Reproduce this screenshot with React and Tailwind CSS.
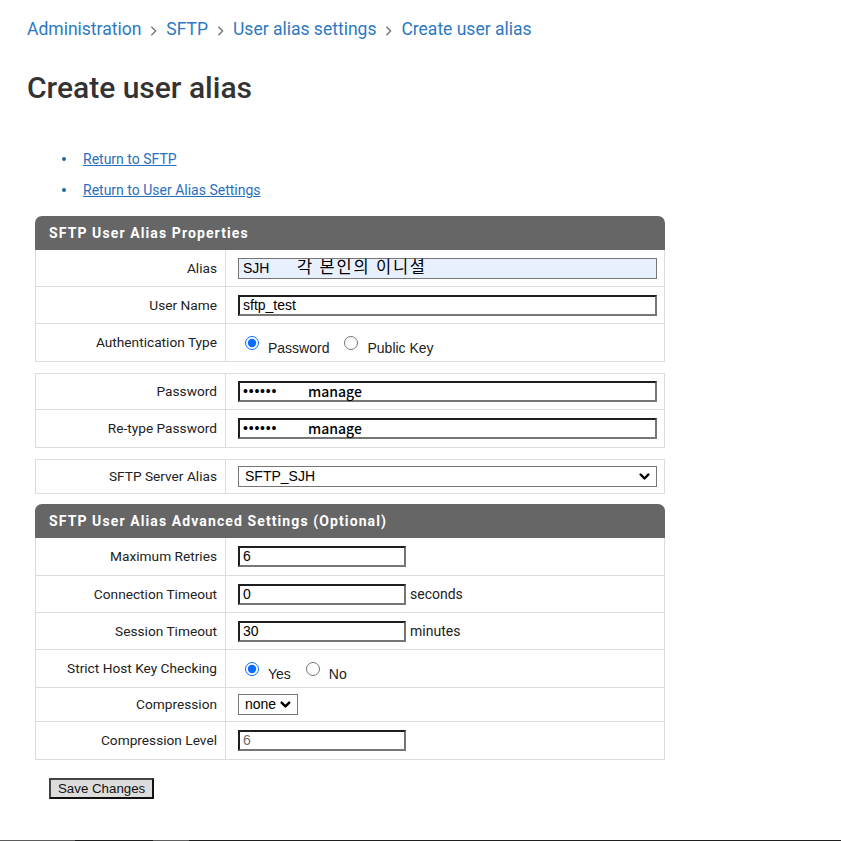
import React from 'react';

const roboto = { fontFamily: 'Roboto, "Noto Sans", sans-serif' };

const insetBase =
  "h-[21px] border-2 border-t-[#1e1e1e] border-l-[#1e1e1e] border-r-[#767676] border-b-[#767676] bg-white px-[3px] text-[14px] font-['Liberation_Sans',Arial,sans-serif] outline-none";
const insetInput = `${insetBase} text-black`;

function Chevron({ className = "" }) {
  return (
    <svg viewBox="0 0 10 10" className={className} fill="none" stroke="currentColor" strokeWidth="2.2" strokeLinecap="round" strokeLinejoin="round">
      <path d="M1.5 3.2 L5 6.8 L8.5 3.2" />
    </svg>
  );
}

function Crumb({ children, last }) {
  return (
    <>
      <span className="text-[#2c79c4]">{children}</span>
      {!last && (
        <svg viewBox="0 0 10 14" className="w-[9px] h-[12px] mx-[8px] mt-[3px] text-[#757575]" fill="none" stroke="currentColor" strokeWidth="1.6">
          <path d="M2.5 2 L7.5 7 L2.5 12" />
        </svg>
      )}
    </>
  );
}

function Row({ label, h, children, first }) {
  return (
    <div className={`flex border-x border-b border-[#dcdcdc] ${first ? 'border-t' : ''}`} style={{ height: h }}>
      <div className="w-[190px] shrink-0 border-r border-[#dcdcdc] flex items-center justify-end pr-[8px] text-[13.7px] text-[#222]">
        {label}
      </div>
      <div className="flex-1 flex items-center pl-[12px] pr-[7px]">{children}</div>
    </div>
  );
}

function Header({ children }) {
  return (
    <div className="h-[34px] bg-[#666666] rounded-t-[7px] flex items-center pl-[14px] text-white text-[14px] font-bold tracking-[1.1px]">
      {children}
    </div>
  );
}

function Radio({ checked, label }) {
  return (
    <label className="flex items-center mr-[8px] font-['Liberation_Sans',Arial,sans-serif] text-[14px] text-[#222]">
      <input type="radio" defaultChecked={checked} readOnly className="w-[14px] h-[14px] ml-[7px] mr-[9px] accent-[#0a6cff]" />
      <span className="mt-[12px]">{label}</span>
    </label>
  );
}

function FakeSelect({ value, className = "" }) {
  return (
    <div className={`h-[21px] border border-[#767676] bg-white flex items-center justify-between pl-[6px] pr-[6px] text-[14px] text-black font-['Liberation_Sans',Arial,sans-serif] ${className}`}>
      <span>{value}</span>
      <Chevron className="w-[11px] h-[11px] ml-[4px]" />
    </div>
  );
}

function Annotated({ note }) {
  return (
    <div className="relative flex-1 flex">
      <input type="password" readOnly value="manage" className={`${insetInput} flex-1 text-[7px] tracking-[0.8px]`} />
      <span className="absolute left-[70px] top-[0px] text-[14px] leading-[21px] font-medium text-black font-['Noto_Sans_CJK_KR',sans-serif]">{note}</span>
    </div>
  );
}

export default function App() {
  return (
    <div className="min-h-[841px] bg-white flex flex-col" style={roboto}>
      <div className="pl-[27px] pt-[17px] flex items-center text-[17.5px] leading-[24px]">
        <Crumb>Administration</Crumb>
        <Crumb>SFTP</Crumb>
        <Crumb>User alias settings</Crumb>
        <Crumb last>Create user alias</Crumb>
      </div>

      <h1 className="pl-[27px] mt-[29px] text-[30px] leading-[36px] font-medium text-[#333]">Create user alias</h1>

      <ul className="mt-[43px] pl-[62px] flex flex-col gap-[11px] text-[14px] leading-[20px]">
        <li className="flex items-center">
          <span className="w-[4px] h-[4px] rounded-full bg-[#1d6aa6] mr-[17px]" />
          <a href="#" className="text-[#2a6fbd] underline">Return to SFTP</a>
        </li>
        <li className="flex items-center">
          <span className="w-[4px] h-[4px] rounded-full bg-[#1d6aa6] mr-[17px]" />
          <a href="#" className="text-[#2a6fbd] underline">Return to User Alias Settings</a>
        </li>
      </ul>

      <div className="ml-[35px] w-[630px] mt-[16px]">
        <Header>SFTP User Alias Properties</Header>
        <Row label="Alias" h={37}>
          <div className="relative flex-1">
            <input readOnly value="SJH" className="w-full h-[21px] border border-[#767676] bg-[#e8f0fe] px-[4px] text-[14px] text-black font-['Liberation_Sans',Arial,sans-serif] outline-none" />
            <span className="absolute left-[59px] top-[0px] text-[16.5px] leading-[20px] tracking-[1.8px] text-black font-['Noto_Sans_CJK_KR',sans-serif]">각 본인의 이니셜</span>
          </div>
        </Row>
        <Row label="User Name" h={37}>
          <input readOnly value="sftp_test" className={`${insetInput} flex-1`} />
        </Row>
        <Row label="Authentication Type" h={38}>
          <Radio checked label="Password" />
          <Radio label="Public Key" />
        </Row>

        <div className="h-[11px]" />
        <Row label="Password" h={37} first>
          <Annotated note="manage" />
        </Row>
        <Row label="Re-type Password" h={38}>
          <Annotated note="manage" />
        </Row>

        <div className="h-[11px]" />
        <Row label="SFTP Server Alias" h={35} first>
          <FakeSelect value="SFTP_SJH" className="flex-1" />
        </Row>

        <div className="h-[10px]" />
        <Header>SFTP User Alias Advanced Settings (Optional)</Header>
        <Row label="Maximum Retries" h={38}>
          <input readOnly value="6" className={`${insetInput} w-[168px]`} />
        </Row>
        <Row label="Connection Timeout" h={37}>
          <input readOnly value="0" className={`${insetInput} w-[168px]`} />
          <span className="ml-[4px] text-[14px] text-[#222]">seconds</span>
        </Row>
        <Row label="Session Timeout" h={37}>
          <input readOnly value="30" className={`${insetInput} w-[168px]`} />
          <span className="ml-[4px] text-[14px] text-[#222]">minutes</span>
        </Row>
        <Row label="Strict Host Key Checking" h={38}>
          <Radio checked label="Yes" />
          <Radio label="No" />
        </Row>
        <Row label="Compression" h={34}>
          <FakeSelect value="none" className="w-[60px]" />
        </Row>
        <Row label="Compression Level" h={38}>
          <input readOnly disabled value="6" className={`${insetBase} w-[168px] text-[#6d6d6d]`} />
        </Row>
      </div>

      <div className="ml-[49px] mt-[18px] flex">
        <button className="h-[21px] px-[7px] bg-[#dcdcdc] border-2 border-t-[#444] border-l-[#444] border-r-[#111] border-b-[#111] text-[13.3px] leading-[16px] text-[#111] font-['Liberation_Sans',Arial,sans-serif]">
          Save Changes
        </button>
      </div>

      <div className="mt-auto h-[1px] flex">
        <div className="w-[75px] bg-[#5a5a5a]" />
        <div className="w-[78px] bg-[#1e1e1e]" />
        <div className="w-[36px] bg-[#606060]" />
        <div className="flex-1 bg-[#1e1e1e]" />
      </div>
    </div>
  );
}
